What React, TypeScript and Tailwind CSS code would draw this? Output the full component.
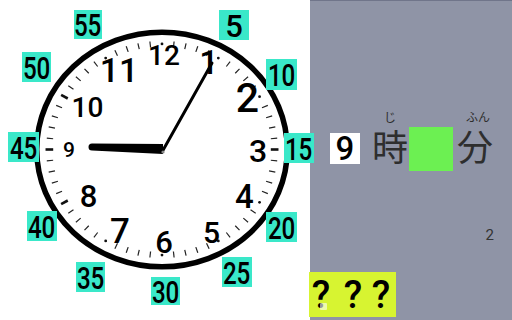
import React from "react";

const CX = 162;
const CY = 149.5;
const RX = 128;
const RY = 120;

const pt = (i: number, r: number): [number, number] => {
  const t = (i * Math.PI) / 30;
  return [CX + r * RX * Math.sin(t), CY - r * RY * Math.cos(t)];
};

const nums: { t: string; x: number; y: number; s: number }[] = [
  { t: "12", x: 164, y: 65, s: 28 },
  { t: "1", x: 209, y: 74, s: 34 },
  { t: "2", x: 247.5, y: 112, s: 41 },
  { t: "3", x: 258, y: 162, s: 32 },
  { t: "4", x: 244.5, y: 208, s: 33 },
  { t: "5", x: 211.5, y: 243, s: 30 },
  { t: "6", x: 164, y: 253, s: 31 },
  { t: "7", x: 120, y: 243, s: 35 },
  { t: "8", x: 88.5, y: 207, s: 31 },
  { t: "9", x: 69, y: 157, s: 21 },
  { t: "10", x: 87.5, y: 117, s: 28 },
  { t: "11", x: 119, y: 82, s: 34 },
];

const labels: { t: string; x: number; y: number; w: number; h: number }[] = [
  { t: "55", x: 74, y: 10, w: 28, h: 29 },
  { t: "5", x: 219, y: 10, w: 30, h: 30 },
  { t: "50", x: 22, y: 52, w: 29, h: 30 },
  { t: "10", x: 266, y: 59, w: 31, h: 31 },
  { t: "45", x: 8, y: 132, w: 31, h: 30 },
  { t: "15", x: 284, y: 133, w: 30, h: 30 },
  { t: "40", x: 27, y: 211, w: 30, h: 30 },
  { t: "20", x: 266, y: 212, w: 31, h: 30 },
  { t: "35", x: 76, y: 262, w: 29, h: 30 },
  { t: "25", x: 222, y: 257, w: 30, h: 30 },
  { t: "30", x: 151, y: 277, w: 29, h: 28 },
];

function Clock() {
  const ticks: React.ReactNode[] = [];
  for (let i = 0; i < 60; i++) {
    if (i % 5 === 0) {
      const h = i / 5;
      if (h === 3 || h === 8 || h === 9 || h === 10) {
        const [x1, y1] = pt(i, 0.85);
        const [x2, y2] = pt(i, 0.91);
        ticks.push(
          <line key={i} x1={x1} y1={y1} x2={x2} y2={y2} stroke="#111" strokeWidth={2.6} />
        );
      } else {
        const [x, y] = pt(i, 0.88);
        ticks.push(<circle key={i} cx={x} cy={y} r={1.4} fill="#111" />);
      }
    } else {
      const [x1, y1] = pt(i, 0.855);
      const [x2, y2] = pt(i, 0.905);
      ticks.push(
        <line key={i} x1={x1} y1={y1} x2={x2} y2={y2} stroke="#222" strokeWidth={1.2} />
      );
    }
  }
  return (
    <svg width={310} height={320} viewBox="0 0 310 320" className="block">
      <ellipse cx={CX} cy={CY} rx={125.3} ry={117.3} fill="#fff" stroke="#000" strokeWidth={5.5} />
      {ticks}
      {nums.map((n) => (
        <text
          key={n.t}
          x={n.x}
          y={n.y}
          fontSize={n.s}
          fontWeight={500}
          textAnchor="middle"
          fill="#000"
          style={{ fontFamily: "Roboto, 'Liberation Sans', sans-serif" }}
        >
          {n.t}
        </text>
      ))}
      <line x1={162} y1={152} x2={212} y2={63} stroke="#000" strokeWidth={3} strokeLinecap="round" />
      <path d="M 92 143.5 L 163 144 L 163 154 L 92 150.5 A 3.5 3.5 0 0 1 92 143.5 Z" fill="#000" />
      <circle cx={163} cy={152} r={1.6} fill="#888" />
    </svg>
  );
}

export default function App() {
  return (
    <div
      className="relative flex w-[512px] h-[320px] overflow-hidden bg-white"
      style={{ fontFamily: "Roboto, 'Noto Sans CJK JP', sans-serif" }}
    >
      <div className="w-[310px] h-full shrink-0">
        <Clock />
      </div>

      <div className="flex-1 h-full flex flex-col bg-[#8f94a6] border-t border-[#70758a] pt-[109px] pb-[3px]">
        <div className="flex items-start pl-[20px]">
          <div className="mt-[23px] w-[30px] h-[31px] bg-white flex items-center justify-center text-[33px] leading-none font-medium text-black">
            9
          </div>
          <div className="ml-[12px] flex flex-col items-center text-[#2e2e2e]">
            <span className="h-[17px] text-[12px] leading-[17px] mb-[4px]">じ</span>
            <span className="text-[36px] leading-[36px]">時</span>
          </div>
          <div className="ml-[1px] mt-[17px] w-[44px] h-[44px] bg-[#6cf052]" />
          <div className="ml-[4px] flex flex-col items-center text-[#2e2e2e]">
            <span className="h-[17px] text-[12px] leading-[17px] mb-[4px] ml-[6px]">ふん</span>
            <span className="text-[36px] leading-[36px]">分</span>
          </div>
        </div>
        <div className="flex justify-end pr-[18px] mt-[57px]">
          <span className="text-[15px] leading-[15px] text-[#333]">2</span>
        </div>
        <div className="mt-auto -ml-px relative w-[87px] h-[45px] bg-[#d7f431] flex items-start pt-[4px] text-[38px] leading-[38px] font-medium text-black">
          <span className="w-[24px] text-center">?</span>
          <span className="w-[24px] text-center ml-[8px]">?</span>
          <span className="w-[24px] text-center ml-[4px]">?</span>
          <div className="absolute left-[11px] top-[31px] w-[7px] h-[7px] bg-white/60 rounded-[1px]" />
        </div>
      </div>

      {labels.map((l) => (
        <div
          key={l.t}
          className="absolute z-10 flex items-center justify-center bg-[#3ae8c9] pt-[2px] text-[31px] leading-none font-medium text-black"
          style={{ left: l.x, top: l.y, width: l.w, height: l.h }}
        >
          <span className={l.t.length > 1 ? "inline-block scale-x-[0.78]" : "inline-block"}>{l.t}</span>
        </div>
      ))}
    </div>
  );
}
